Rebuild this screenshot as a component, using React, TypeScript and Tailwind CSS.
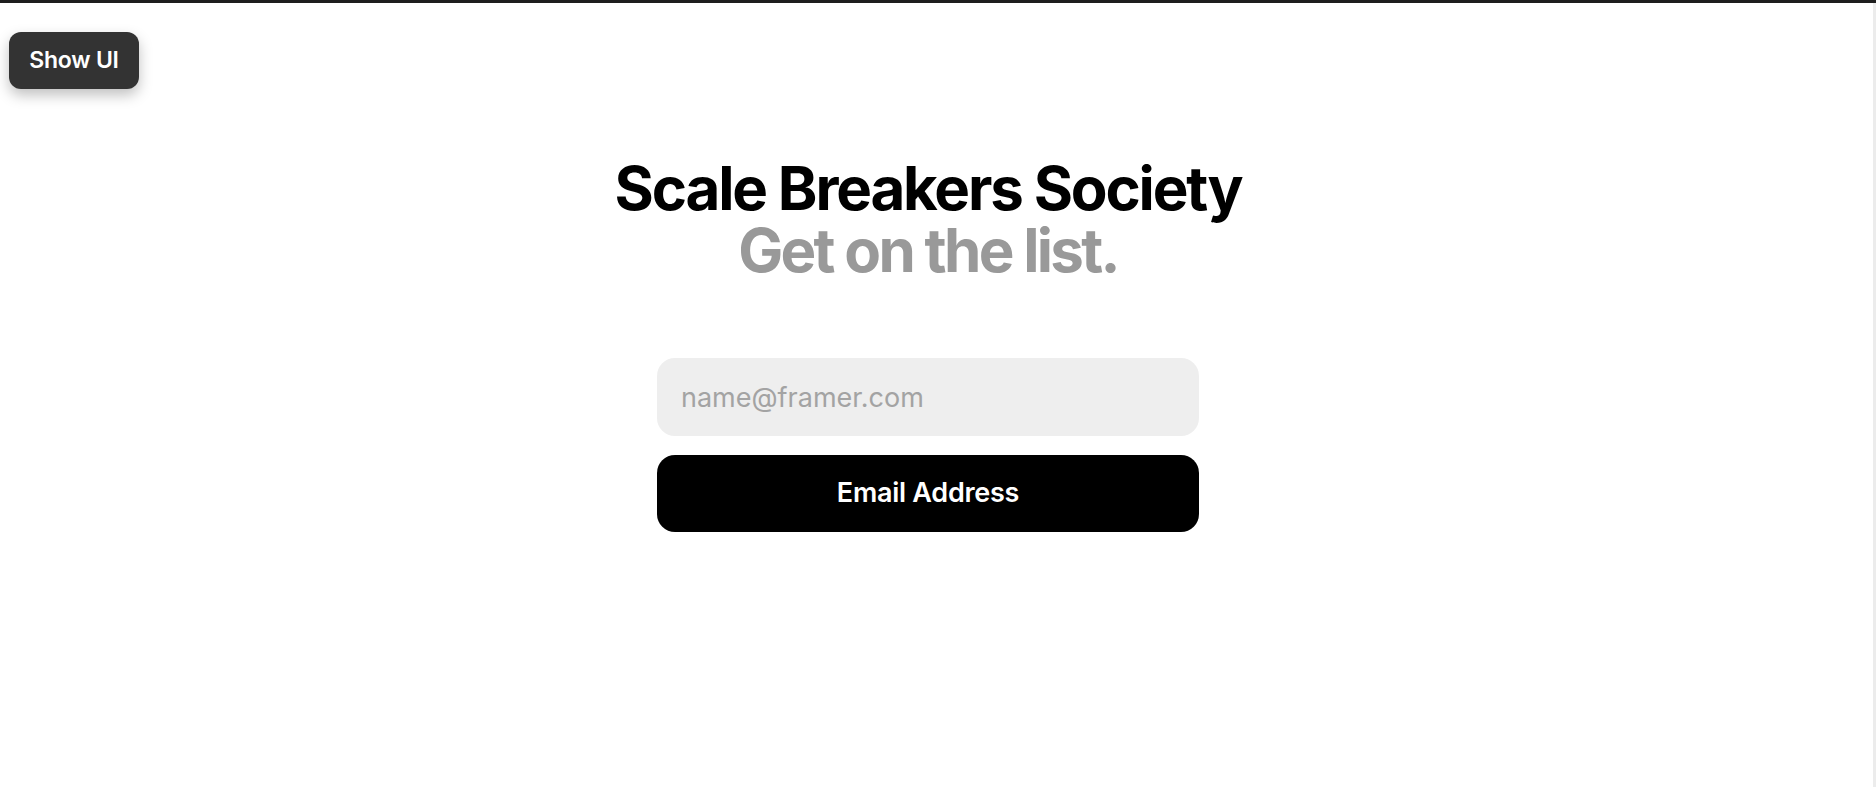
import { useState } from "react";

export default function App() {
  const [email, setEmail] = useState("");

  return (
    <div className="relative flex h-[787px] w-full overflow-hidden border-t-[3px] border-[#1e1e1e] bg-white font-['Inter',sans-serif]">
      <button className="absolute left-[9px] top-[29px] flex h-[57px] w-[130px] items-center justify-center rounded-[12px] bg-[#333333] text-[23px] font-semibold tracking-[-0.01em] text-white shadow-[0_6px_14px_rgba(0,0,0,0.25)]">
        Show UI
      </button>

      <main className="flex flex-1 flex-col items-center pt-[154px]">
        <h1 className="text-center text-[60px] font-bold leading-[62px] tracking-[-0.036em] text-black">
          Scale Breakers Society
          <br />
          <span className="text-[#999999] tracking-[-0.045em]">Get on the list.</span>
        </h1>

        <form
          className="mt-[77px] flex w-[542px] flex-col gap-[19px]"
          onSubmit={(e) => e.preventDefault()}
        >
          <input
            type="email"
            value={email}
            onChange={(e) => setEmail(e.target.value)}
            placeholder="name@framer.com"
            className="h-[78px] w-full rounded-[18px] bg-[#eeeeee] px-6 text-[27px] text-black outline-none placeholder:text-[#a3a3a3]"
          />
          <button
            type="submit"
            className="h-[77px] w-full rounded-[18px] bg-black text-[27px] font-semibold tracking-[-0.01em] text-white"
          >
            Email Address
          </button>
        </form>
      </main>

      <div className="w-[17px] shrink-0" />
      <div className="w-[3px] shrink-0 bg-[#ececec]" />
    </div>
  );
}
